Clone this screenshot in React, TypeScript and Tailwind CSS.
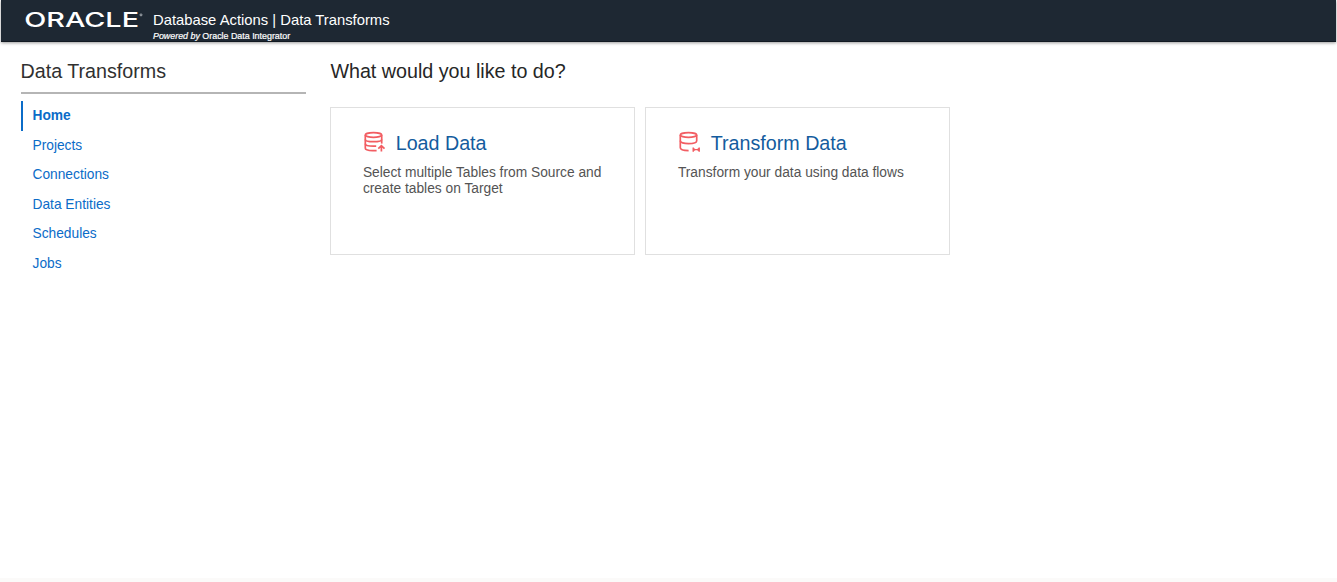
import type { ReactNode } from "react";

const navItems = ["Home", "Projects", "Connections", "Data Entities", "Schedules", "Jobs"];

function OracleLogo() {
  return (
    <svg width="120" height="20" viewBox="0 0 120 20" className="shrink-0 overflow-visible" role="img" aria-label="Oracle">
      <text
        x="-0.8"
        y="17.3"
        fontFamily="Inter, 'Liberation Sans', sans-serif"
        fontWeight="500"
        fontSize="20.5"
        textLength="114.8"
        lengthAdjust="spacingAndGlyphs"
        fill="#fff"
      >
        ORACLE
      </text>
      <circle cx="116" cy="4.9" r="1" fill="none" stroke="#c3c8cd" strokeWidth="0.8" />
    </svg>
  );
}

function LoadIcon() {
  return (
    <svg width="22" height="22" viewBox="0 0 22 22" fill="none" stroke="#f25d62" strokeWidth="1.7" className="shrink-0 overflow-visible">
      <ellipse cx="10.5" cy="3" rx="8.2" ry="2.3" />
      <path d="M2.3 3V16.3C2.3 17.6 5.6 18.6 9.6 18.6H13.6" />
      <path d="M18.7 3V11.6" />
      <path d="M2.3 7.4C2.3 8.8 5.7 9.7 10.5 9.7S18.7 8.8 18.7 7.4" />
      <path d="M2.3 11.8C2.3 13.3 5.7 14.2 10.5 14.2H13.2" />
      <path d="M18.4 19.5V13.8M15.3 16.6L18.4 13.6L21.5 16.6" />
    </svg>
  );
}

function TransformIcon() {
  return (
    <svg width="22" height="22" viewBox="0 0 22 22" fill="none" stroke="#f25d62" strokeWidth="1.7" className="shrink-0 overflow-visible">
      <ellipse cx="10.5" cy="3" rx="8.2" ry="2.3" />
      <path d="M2.3 3V15.8C2.3 17.4 5.6 18.6 10.6 18.6" />
      <path d="M18.7 3V8.8C18.7 10.6 15.3 11.7 10.5 11.7S2.3 10.6 2.3 8.8" />
      <path d="M15.2 15.5V19.8M21.2 15.5V19.8M15.2 17.6H21.2" strokeWidth="1.4" />
      <path d="M15.2 15.7L18.2 17.6L15.2 19.6ZM21.2 15.7L18.2 17.6L21.2 19.6Z" fill="#f25d62" stroke="none" />
    </svg>
  );
}

function Card({ icon, title, children }: { icon: ReactNode; title: string; children: ReactNode }) {
  return (
    <section className="h-[148px] w-[305px] border border-[#e0e0e0] pl-[31.5px] pr-5 pt-[23px]">
      <div className="flex h-6 items-center gap-[10.8px]">
        {icon}
        <h2 className="text-[19.7px] leading-6 text-[#145c9e]">{title}</h2>
      </div>
      <p className="mt-[10px] text-[13.77px] leading-4 text-[#545454]">{children}</p>
    </section>
  );
}

export default function App() {
  return (
    <div className="flex h-[582px] w-[1337px] flex-col border-b-4 border-[#fbfaf9] bg-white font-['Liberation_Sans',Arial,sans-serif]">
      <header className="ml-px mr-px flex h-[42px] shrink-0 border-b border-[#121a22] bg-[#1e2833] pl-6 text-white shadow-[0_1px_3px_rgba(0,0,0,0.4)]">
        <div className="pt-2.5">
          <OracleLogo />
        </div>
        <div className="ml-2 pt-[11px]">
          <div className="text-[14.8px] leading-[18px]">Database Actions | Data Transforms</div>
          <div className="mt-[1px] text-[8.9px] leading-3 [-webkit-text-stroke:0.2px_white]">
            <em>Powered by</em> Oracle Data Integrator
          </div>
        </div>
      </header>
      <div className="flex flex-1 pl-[20.5px] pt-[17px]">
        <aside className="w-[285px]">
          <h1 className="text-[19.7px] leading-6 text-[#303030]">Data Transforms</h1>
          <div className="mt-[9px] h-[2px] bg-[#b5b5b5]" />
          <nav className="mt-[7px] flex flex-col text-[13.75px] text-[#0b6cc8]">
            {navItems.map((item, i) => (
              <a
                key={item}
                className={
                  i === 0
                    ? "flex h-[29.6px] items-center border-l-2 border-[#0b6cc8] pl-2.5 pt-px font-bold"
                    : "flex h-[29.6px] items-center pl-3 pt-px"
                }
              >
                {item}
              </a>
            ))}
          </nav>
        </aside>
        <main className="ml-[24.9px]">
          <h1 className="text-[19.7px] leading-6 text-[#262626]">What would you like to do?</h1>
          <div className="mt-6 flex gap-2.5">
            <Card icon={<LoadIcon />} title="Load Data">
              Select multiple Tables from Source and create tables on Target
            </Card>
            <Card icon={<TransformIcon />} title="Transform Data">
              Transform your data using data flows
            </Card>
          </div>
        </main>
      </div>
    </div>
  );
}
